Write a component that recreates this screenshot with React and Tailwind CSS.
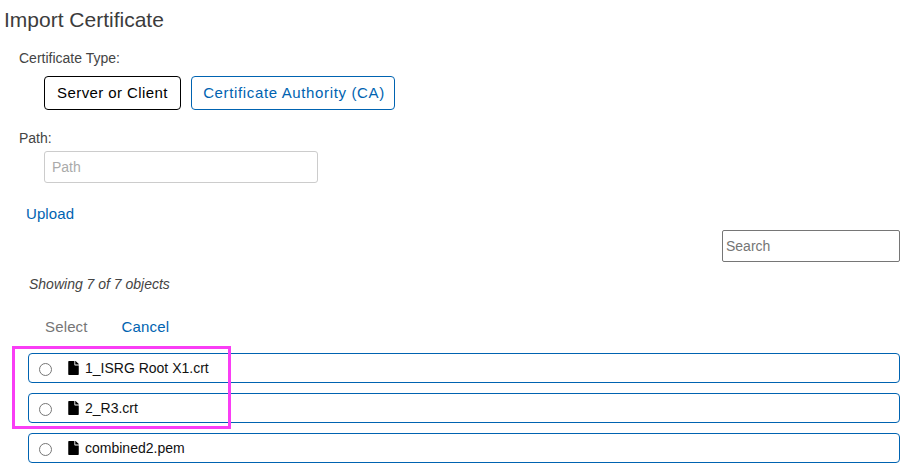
import { FaFile } from 'react-icons/fa'

const files = ['1_ISRG Root X1.crt', '2_R3.crt', 'combined2.pem']

function FileRow({ name }) {
  return (
    <div className="flex items-center h-[30px] ml-[28px] mr-[4px] border border-[#0063b1] rounded-[4px] bg-white">
      <span className="w-[13px] h-[13px] ml-[10px] mt-[2px] rounded-full border border-[#767676] bg-white shrink-0" />
      <FaFile className="ml-[15px] w-[13px] h-[14px] text-black shrink-0 -mt-[1px]" />
      <span className="ml-[5px] text-[14px] leading-[20px] text-[#111]">{name}</span>
    </div>
  )
}

export default function App() {
  return (
    <div className="relative w-[904px] h-[467px] overflow-hidden bg-white font-['Liberation_Sans',Arial,sans-serif] text-[#333]">
      <h1 className="pt-[7px] pl-[4px] text-[21px] leading-[26px] font-normal text-[#3c3c3c]">Import Certificate</h1>

      <div className="mt-[17px] pl-[19px] text-[14px] leading-[16px] text-[#444]">Certificate Type:</div>
      <div className="flex gap-[10px] mt-[10px] pl-[44px]">
        <button className="h-[34px] w-[137px] border border-black rounded-[4px] text-[15px] tracking-[0.42px] text-black bg-white">Server or Client</button>
        <button className="h-[34px] w-[204px] pl-[2px] border border-[#0063b1] rounded-[4px] text-[15px] tracking-[0.64px] text-[#0063b1] bg-white">Certificate Authority (CA)</button>
      </div>

      <div className="mt-[20px] pl-[19px] text-[14px] leading-[16px] text-[#444]">Path:</div>
      <div className="mt-[5px] pl-[44px]">
        <input placeholder="Path" className="w-[274px] h-[32px] px-[7px] border border-[#ccc] rounded-[3px] text-[14px] outline-none placeholder:text-[#aaa]" />
      </div>

      <div className="mt-[22px] pl-[26px] text-[15px] leading-[18px] tracking-[0.1px] text-[#0063b1]">Upload</div>

      <div className="flex justify-end mt-[7px] pr-[4px]">
        <input placeholder="Search" className="w-[178px] h-[32px] px-[3px] border border-[#767676] rounded-[2px] text-[14px] outline-none placeholder:text-[#757575]" />
      </div>

      <div className="mt-[13px] pl-[29px] text-[14px] leading-[18px] italic text-[#444]">Showing 7 of 7 objects</div>

      <div className="flex gap-[34px] mt-[25px] pl-[45px] text-[15px] leading-[18px] tracking-[0.15px]">
        <span className="text-[#767676]">Select</span>
        <span className="text-[#0063b1]">Cancel</span>
      </div>

      <div className="flex flex-col gap-[10px] mt-[17px]">
        {files.map(f => <FileRow key={f} name={f} />)}
      </div>

      <div className="absolute left-[12px] top-[346px] w-[219px] h-[83px] border-[3px] border-[#f93df5]" />
    </div>
  )
}
